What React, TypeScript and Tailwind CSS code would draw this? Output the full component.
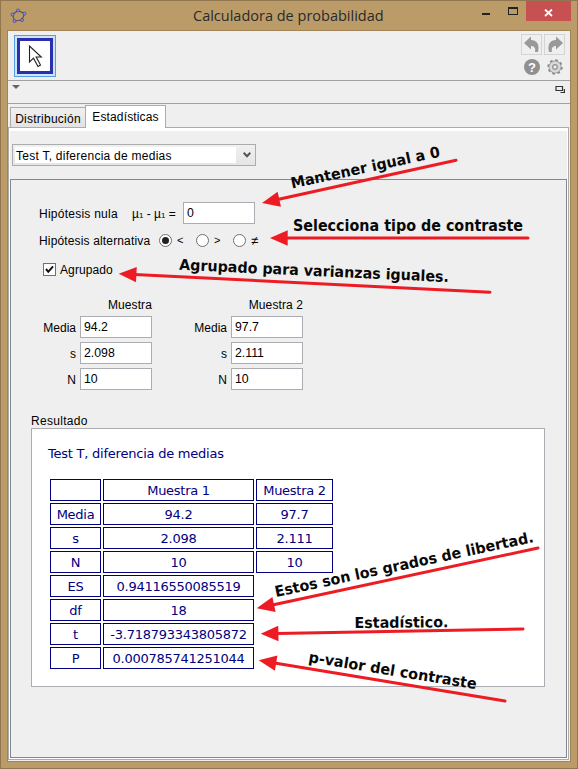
import React from "react";

const field =
  "flex h-[22px] w-[72px] items-center border border-[#abadb3] bg-white pl-[3px] pt-px text-[12.3px] text-black";

type SampleProps = { title: string; mean: string; s: string; n: string };

function Sample({ title, mean, s, n }: SampleProps) {
  const rows = [
    ["Media", mean],
    ["s", s],
    ["N", n],
  ];
  return (
    <div className="flex w-[112px] flex-col">
      <div className="h-[19px] text-right leading-[16px] tracking-[0.1px]">{title}</div>
      <div className="flex flex-col gap-1">
        {rows.map(([label, value]) => (
          <div key={label} className="flex h-[22px] items-center justify-end gap-1">
            <span className="pt-px">{label}</span>
            <div className={field}>{value}</div>
          </div>
        ))}
      </div>
    </div>
  );
}

function Radio({ label, on }: { label: string; on?: boolean }) {
  return (
    <div className="flex w-[37px] items-center gap-[5px]">
      <span className="flex size-[13px] items-center justify-center rounded-full border border-[#707070] bg-white">
        {on && <span className="size-[7px] rounded-full bg-[#212121]" />}
      </span>
      <span className={label === "≠" ? "text-[13px] leading-none" : "text-[11px]"}>{label}</span>
    </div>
  );
}

function Cell({ children, w }: { children?: React.ReactNode; w: string }) {
  return (
    <div className={`${w} flex h-[22px] items-center justify-center border border-[#000080] pt-px`}>
      {children}
    </div>
  );
}

const results: string[][] = [
  ["", "Muestra 1", "Muestra 2"],
  ["Media", "94.2", "97.7"],
  ["s", "2.098", "2.111"],
  ["N", "10", "10"],
  ["ES", "0.94116550085519"],
  ["df", "18"],
  ["t", "-3.718793343805872"],
  ["P", "0.000785741251044"],
];

const notes = [
  { text: "Mantener igual a 0", x: 292, y: 188.5, a: -12.1, len: 152, from: [457, 160], to: [262, 203] },
  { text: "Selecciona tipo de contraste", x: 293, y: 231.2, a: 0, len: 230, from: [529, 238], to: [270, 238] },
  { text: "Agrupado para varianzas iguales.", x: 179, y: 269.8, a: 2.6, len: 270, from: [491, 292.3], to: [118.7, 273.7] },
  { text: "Estos son los grados de libertad.", x: 276, y: 597, a: -12.05, len: 264, from: [539, 547.8], to: [256.7, 608.3] },
  { text: "Estadístico.", x: 354.5, y: 628, a: -0.5, len: 94, from: [524, 629], to: [260.7, 633.8] },
  { text: "p-valor del contraste", x: 308, y: 662, a: 9.2, len: 170, from: [506, 701.2], to: [258.7, 660.3] },
];

function Annotations() {
  return (
    <svg className="pointer-events-none absolute -left-px -top-px" width="578" height="769" viewBox="0 0 578 769">
      {notes.map((n) => {
        const dx = n.from[0] - n.to[0];
        const dy = n.from[1] - n.to[1];
        const len = Math.hypot(dx, dy);
        const ang = (Math.atan2(dy, dx) * 180) / Math.PI;
        return (
          <g key={n.text}>
            <g transform={`translate(${n.to[0]} ${n.to[1]}) rotate(${ang})`}>
              <path d={`M16 0H${len - 1}`} stroke="#ed1c24" strokeWidth="3" strokeLinecap="round" />
              <path d="M0 0L17.7 -7.7V7.7Z" fill="#ed1c24" />
            </g>
            <text
              transform={`translate(${n.x} ${n.y}) rotate(${n.a})`}
              textLength={n.len}
              lengthAdjust="spacingAndGlyphs"
              className="fill-[#080808] font-['DejaVu_Sans',sans-serif] text-[15px] font-bold"
            >
              {n.text}
            </text>
          </g>
        );
      })}
    </svg>
  );
}

function TitleBar() {
  return (
    <div className="flex h-[29px] shrink-0 items-start">
      <svg width="18" height="18" viewBox="0 0 18 18" className="ml-[8px] mt-[5px]">
        <path d="M3.5 8.5L9 4.5L15.5 7.5L13 14L5.5 15Z" fill="none" stroke="#555" strokeWidth="1.1" />
        {[[3.5, 8.5], [9, 4.5], [15.5, 7.5], [13, 14], [5.5, 15]].map(([x, y]) => (
          <circle key={x} cx={x} cy={y} r="1.5" fill="#8f8fff" stroke="#333366" strokeWidth=".6" />
        ))}
      </svg>
      <div className="ml-[166px] mt-[4px] w-[195px] whitespace-nowrap font-['Open_Sans',sans-serif] text-[14.5px] leading-[22px] text-[#2a2a2a]">
        Calculadora de probabilidad
      </div>
      <div className="ml-auto flex items-start">
        <div className="mt-[12px] h-[2px] w-[8px] bg-[#222]" />
        <div className="ml-[18px] mt-[6px] h-[8px] w-[10px] border border-t-2 border-[#222]" />
        <div className="ml-[8px] mr-[6px] flex h-[20px] w-[45px] items-center justify-center bg-[#c75050]">
          <svg width="9" height="8" viewBox="0 0 9 8" className="mt-[3px]">
            <path d="M1 .5L8 7M8 .5L1 7" stroke="#fff" strokeWidth="1.8" />
          </svg>
        </div>
      </div>
    </div>
  );
}

function Toolbar() {
  return (
    <div className="flex h-[50px] shrink-0 justify-between border-b border-[#a0a0a0]">
      <div className="ml-[6px] mt-[4px] flex size-[42px] items-center justify-center border border-[#569de5] bg-[#cce4f7]">
        <div className="size-[36px] border-[3px] border-[#2a2fb0] bg-white">
          <svg width="30" height="30" viewBox="0 0 30 30">
            <path
              d="M9.5 5V21L13.5 17.2L18 25.5L20.5 24L16.2 16H21.3Z"
              fill="#fff"
              stroke="#222"
              strokeWidth="1.1"
            />
          </svg>
        </div>
      </div>
      <div className="mr-[5px] mt-[3px] grid grid-cols-[21px_21px] grid-rows-[21px_25px] gap-x-[2px]">
        <div className="size-[21px] border border-[#d4d4d4]">
          <svg width="19" height="19" viewBox="0 0 19 19">
            <path d="M2 8L9 1.5V5C14.5 5 18 9 16 17H13C14 13 12 11 9 11V14.5Z" fill="#999" />
          </svg>
        </div>
        <div className="size-[21px] border border-[#d4d4d4]">
          <svg width="19" height="19" viewBox="0 0 19 19">
            <path d="M18 8L11 1.5V5C5.5 5 2 9 4 17H7C6 13 8 11 11 11V14.5Z" fill="#999" />
          </svg>
        </div>
        <div className="ml-[3px] mt-[4px] flex size-[16px] items-center justify-center rounded-full bg-[#909090] font-['Liberation_Sans',sans-serif] text-[13px] font-bold leading-none text-white">
          ?
        </div>
        <svg width="16" height="16" viewBox="0 0 16 16" className="ml-[3px] mt-[4px]">
          <circle cx="8" cy="8" r="6.7" fill="none" stroke="#888" strokeWidth="2" strokeDasharray="2.6 2.66" />
          <circle cx="8" cy="8" r="4.3" fill="none" stroke="#909090" strokeWidth="4.2" />
          <circle cx="8" cy="8" r="4.3" fill="none" stroke="#d8d8d8" strokeWidth="2.8" />
          <circle cx="8" cy="8" r="2" fill="#efefef" stroke="#888" strokeWidth=".8" />
        </svg>
      </div>
    </div>
  );
}

function StatsPanel() {
  return (
    <div className="mt-[13px] flex flex-1 flex-col border border-[#828790]">
      <div className="ml-[28px] mt-[22px] flex h-[22px] items-center">
        <span className="w-[93px] pt-px tracking-[0.25px]">Hipótesis nula</span>
        <span className="w-[51px] whitespace-nowrap pt-px">
          µ<span className="text-[8px]">1</span> - µ<span className="text-[8px]">1</span> =
        </span>
        <div className={field}>0</div>
      </div>
      <div className="ml-[28px] mt-[8px] flex h-[16px] items-center">
        <span className="w-[120px] whitespace-nowrap pt-px tracking-[0.15px]">Hipótesis alternativa</span>
        <Radio label="<" on />
        <Radio label=">" />
        <Radio label="≠" />
      </div>
      <div className="ml-[32px] mt-[15px] flex h-[13px] items-center gap-1">
        <span className="flex size-[13px] items-center justify-center border border-[#707070] bg-white">
          <svg width="11" height="11" viewBox="0 0 11 11">
            <path d="M2 5L4.3 7.8L9 2.3" fill="none" stroke="#111" strokeWidth="2" />
          </svg>
        </span>
        <span className="tracking-[0.1px]">Agrupado</span>
      </div>
      <div className="ml-[29px] mt-[21px] flex gap-[39px]">
        <Sample title="Muestra" mean="94.2" s="2.098" n="10" />
        <Sample title="Muestra 2" mean="97.7" s="2.111" n="10" />
      </div>
      <div className="ml-[20px] mt-[23px] h-[15px] pt-px leading-[15px] tracking-[0.3px]">Resultado</div>
      <div className="ml-[20px] h-[259px] w-[514px] border border-[#abadb3] bg-white font-['DejaVu_Sans',sans-serif] text-[13px] leading-[16px] tracking-[-0.27px] text-[#000080]">
        <div className="ml-[16px] mt-[17px] h-[33px] tracking-[-0.23px]">Test T, diferencia de medias</div>
        <div className="ml-[18px] flex flex-col gap-[2px]">
          {results.map((r, i) => (
            <div key={i} className="flex gap-[2px]">
              <Cell w="w-[51px]">{r[0]}</Cell>
              <Cell w="w-[151px]">{r[1]}</Cell>
              {r[2] && <Cell w="w-[77px]">{r[2]}</Cell>}
            </div>
          ))}
        </div>
      </div>
    </div>
  );
}

export default function App() {
  return (
    <div className="relative flex h-[769px] w-[578px] flex-col overflow-hidden border border-[#917750] bg-[#bb9c69] font-['Liberation_Sans',Arial,sans-serif] text-[12px] text-black">
      <TitleBar />
      <div className="mx-[6px] mb-[6px] flex flex-1 flex-col border border-[#a08458] bg-[#efefef]">
        <Toolbar />
        <div className="flex h-[23px] shrink-0 items-start justify-between border-b border-[#a0a0a0]">
          <svg width="8" height="4" viewBox="0 0 8 4" className="ml-[4px] mt-[4px]">
            <path d="M0 0H8L4 4Z" fill="#666" />
          </svg>
          <svg width="10" height="8" viewBox="0 0 10 8" className="mr-[5px] mt-[5px]">
            <path d="M1 .5H7.5V4.5H1ZM9.4 3V6.5H5.5" fill="none" stroke="#333" strokeWidth="1.2" />
          </svg>
        </div>
        <div className="ml-[2px] mt-px flex h-[22px] shrink-0 items-end">
          <div className="flex h-[20px] w-[75px] items-center justify-center border border-r-0 border-b-0 border-[#acacac] bg-linear-to-b from-[#f0f0f0] to-[#e3e3e3] pt-[2px] tracking-[0.25px]">
            Distribución
          </div>
          <div className="z-10 -mb-px flex h-[23px] w-[81px] items-center justify-center border border-b-0 border-[#acacac] bg-white tracking-[0.15px]">
            Estadísticas
          </div>
        </div>
        <div className="mb-px mr-px flex flex-1 flex-col border border-[#acacac] bg-white px-px pb-px pt-[3px]">
          <div className="flex flex-1 flex-col bg-[#efefef]">
            <div className="ml-[2px] mt-[13px] flex h-[22px] w-[244px] items-center border border-[#acacac] bg-linear-to-b from-[#f0f0f0] to-[#e5e5e5] p-[2px]">
              <div className="flex h-[16px] w-[221px] items-center bg-white pl-px pt-px tracking-[0.26px]">
                Test T, diferencia de medias
              </div>
              <svg width="8" height="6" viewBox="0 0 8 6" className="ml-[7px]">
                <path d="M.7 .8L4 4.3L7.3 .8" fill="none" stroke="#555" strokeWidth="2" />
              </svg>
            </div>
            <StatsPanel />
          </div>
        </div>
      </div>
      <Annotations />
    </div>
  );
}
